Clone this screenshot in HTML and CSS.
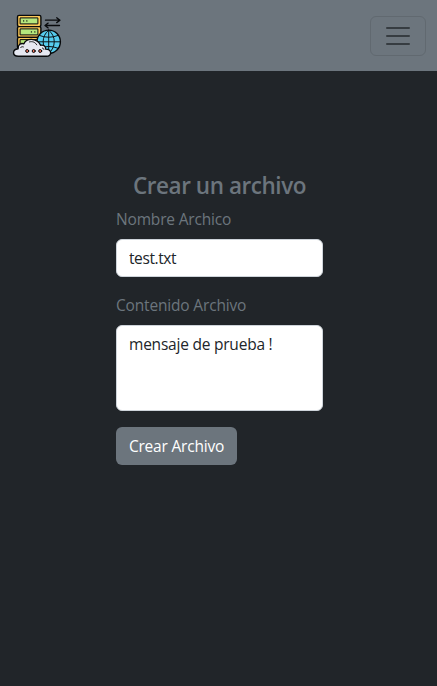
FILE: index.html
```html
<!DOCTYPE html>
<html lang="es">
<head>
<meta charset="utf-8">
<meta name="viewport" content="width=device-width, initial-scale=1">
<title>Crear un archivo</title>
<link rel="stylesheet" href="styles.css">
</head>
<body>
<nav class="navbar">
  <a class="brand" href="#" aria-label="Inicio">
    <svg width="50" height="50" viewBox="12 10 50 50" fill="none" stroke="#080a0c" stroke-width="1.4" stroke-linecap="round" stroke-linejoin="round">
      <g fill="#fcc958">
        <rect x="17.5" y="15.4" width="23.4" height="11.2" rx="1.5"/>
        <rect x="17.5" y="26.6" width="23.4" height="10.8" rx="1.5"/>
        <rect x="17.5" y="37.4" width="23.4" height="11" rx="1.5"/>
      </g>
      <g fill="#b4e67c" stroke-width="1">
        <rect x="20.5" y="17.9" width="17.4" height="6"/>
        <rect x="20.5" y="28.9" width="17.4" height="6"/>
        <rect x="20.5" y="39.6" width="17.4" height="6"/>
      </g>
      <path d="M23.6 20.9h.1M26.8 20.9h.1M31.4 31.9h.1M34.8 31.9h.1" stroke-width="1.3"/>
      <path d="M45.5 20.2H60M56.7 17.8l3.3 2.4-3.3 2.4M59.5 25.5H45M48.2 23.1L45 25.5l3.2 2.4" stroke-width="1.3"/>
      <circle cx="48.7" cy="41.8" r="11.7" fill="#56cdee"/>
      <path d="M48.7 30.1v23.4M37.5 41.8h22.9M39.5 35.5q9.2 3.6 18.4 0M39.5 48.2q9.2-3.6 18.4 0M48.7 30.1c-7.5 6-7.5 17 0 23.4M48.7 30.1c7.5 6 7.5 17 0 23.4" stroke-width=".95"/>
      <path d="M18.3 56.3C12.2 56.3 11.8 49.6 18.1 48.8C17.8 44.4 21 42.8 23.9 43.8C26.2 38 36.5 37.4 40.6 45.2C44 44.6 46 46.6 45.6 49.1C52.3 49.3 52.2 56.3 46.4 56.3Z" fill="#e6e8f1"/>
      <path d="M29.5 41.9c3-.9 5.8.3 7.2 2.9M20.6 47.6c.7-1 1.7-1.1 2.8-.7M42.4 48.1c1 .1 1.4.6 1.5 1.4" stroke-width=".9"/>
      <g fill="#f5735a" stroke-width="1"><circle cx="27.2" cy="51" r="1.5"/><circle cx="33.7" cy="51" r="1.5"/><circle cx="40.2" cy="51" r="1.5"/></g>
    </svg>
  </a>
  <button class="toggler" type="button" aria-label="Menú">
    <svg width="30" height="30" viewBox="0 0 30 30" stroke="#363c41" stroke-width="2" stroke-linecap="round"><path d="M4 7h22M4 15h22M4 23h22"/></svg>
  </button>
</nav>
<main class="content">
  <form class="form">
    <h1 class="title">Crear un archivo</h1>
    <label class="label name-label" for="nombre">Nombre Archico</label>
    <input class="control name" id="nombre" type="text" value="test.txt">
    <label class="label content-label" for="contenido">Contenido Archivo</label>
    <textarea class="control area" id="contenido">mensaje de prueba !</textarea>
    <button class="submit" type="button"><span>Crear Archivo</span></button>
  </form>
</main>
</body>
</html>
```
FILE: styles.css
```css
* { box-sizing: border-box; }
body {
  margin: 0;
  min-height: 100vh;
  background: #212529;
  color: #6c757d;
  font: 400 16px/24px "Segoe UI", "Open Sans", "Noto Sans", sans-serif;
}
.navbar {
  height: 71px;
  padding: 1px 11px 0 12px;
  display: flex;
  align-items: center;
  justify-content: space-between;
  background: #6c757d;
}
.brand { display: flex; margin-top: -2px; }
.brand svg { display: block; }
.toggler {
  width: 56px;
  height: 40px;
  padding: 0;
  display: flex;
  align-items: center;
  justify-content: center;
  background: transparent;
  border: 1px solid #616970;
  border-radius: 6px;
}
.content {
  padding: 100px 2px 0 0;
  display: flex;
  justify-content: center;
}
.form {
  width: 207px;
  margin-left: 4px;
  display: flex;
  flex-direction: column;
}
.title {
  margin: 0 0 7px;
  text-align: center;
  white-space: nowrap;
  font-size: 22.5px;
  line-height: 29px;
  font-weight: 600;
  letter-spacing: -.45px;
}
.label {
  margin-bottom: 8px;
  font-size: 15.5px;
  letter-spacing: -.17px;
}
.control {
  width: 100%;
  height: 38px;
  padding: 6px 12px;
  background: #fff;
  color: #212529;
  border: 1px solid #ced4da;
  border-radius: 6px;
  font: inherit;
  font-size: 15.5px;
  letter-spacing: -.22px;
  outline: 0;
}
.name { letter-spacing: -.4px; }
.content-label { margin-top: 16px; }
.area {
  height: 86px;
  resize: none;
  overflow: hidden;
}
.submit {
  width: 121px;
  height: 38px;
  margin-top: 16px;
  padding: 0;
  background: #6c757d;
  color: #fff;
  border: 0;
  border-radius: 6px;
  font: inherit;
  font-size: 15.5px;
  letter-spacing: -.2px;
  white-space: nowrap;
}
```
